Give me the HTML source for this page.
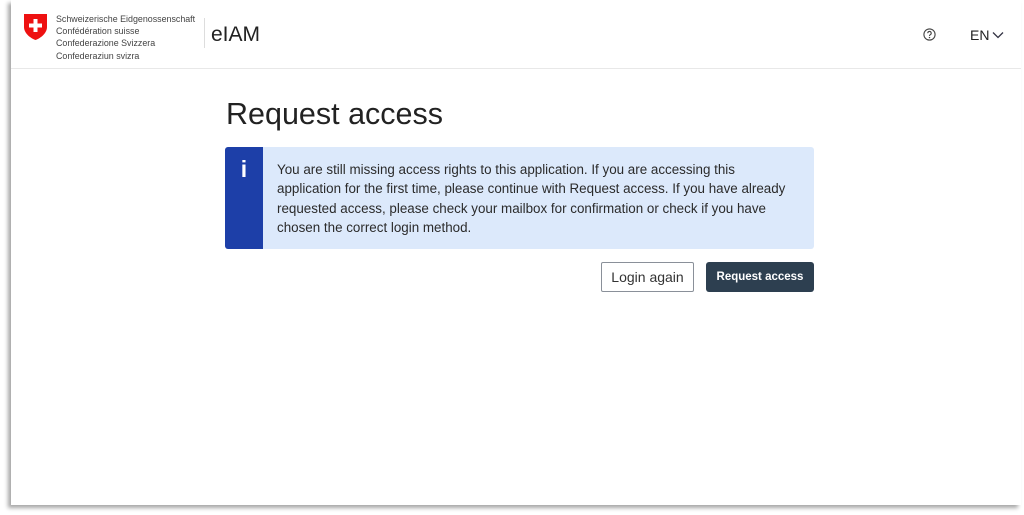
<!DOCTYPE html>
<html><head><meta charset="utf-8"><style>
*{margin:0;padding:0;box-sizing:border-box}
body{width:1024px;height:515px;background:#fff;font-family:"Liberation Sans","DejaVu Sans",sans-serif;position:relative;overflow:hidden}
.page{position:absolute;left:11px;top:0;width:1010px;height:505px;background:#fff;box-shadow:-3px 3px 4px rgba(0,0,0,.35)}
.hdr{position:absolute;left:0;top:0;width:1010px;height:69px;border-bottom:1px solid #e8e8e8}
.fed{position:absolute;left:45px;top:13px;font-size:8.9px;line-height:12.2px;color:#444}
.sep{position:absolute;left:193px;top:18px;width:1px;height:30px;background:#ddd}
.eiam{position:absolute;left:200px;top:23px;font-size:21px;color:#222}
h1{position:absolute;left:215px;top:97px;font-size:30.5px;font-weight:normal;color:#222}
.box{position:absolute;left:214px;top:147px;width:589px;height:102px;background:#dce9fb;border-radius:3px;overflow:hidden}
.bar{position:absolute;left:0;top:0;width:38px;height:102px;background:#1d3fa8;color:#fff;font-size:23px;font-weight:bold;text-align:center;padding-top:9px}
.txt{position:absolute;left:52px;top:13px;font-size:13.4px;line-height:19.3px;color:#2b2b2b;white-space:nowrap}
.b1{position:absolute;left:590px;top:262px;width:93px;height:30px;border:1px solid #8a9099;border-radius:2px;font-size:14px;color:#333;text-align:center;line-height:28px}
.b2{position:absolute;left:695px;top:262px;width:108px;height:30px;background:#2d3f50;border-radius:3px;font-size:11.5px;font-weight:bold;color:#fff;text-align:center;line-height:30px}
</style></head><body>
<div class="page">
<div class="hdr">
<svg style="position:absolute;left:13px;top:14px" width="23" height="26" viewBox="0 0 23 26"><path d="M0 0H23V13C23 19 17 24 11.5 26C6 24 0 19 0 13Z" fill="#e11"/><path d="M9.5 5h4v4.5h4.5v4h-4.5v4.5h-4v-4.5h-4.5v-4h4.5z" fill="#fff"/></svg>
<div class="fed">Schweizerische Eidgenossenschaft<br>Confédération suisse<br>Confederazione Svizzera<br>Confederaziun svizra</div>
<div class="sep"></div>
<div class="eiam">eIAM</div>
<svg style="position:absolute;left:912px;top:28px" width="13" height="13" viewBox="0 0 13 13"><circle cx="6.5" cy="6.5" r="5.6" fill="none" stroke="#444" stroke-width="1.1"/><path d="M4.8 5.2a1.7 1.7 0 1 1 2.4 1.5c-.6.3-.7.7-.7 1.3" fill="none" stroke="#444" stroke-width="1.1"/><circle cx="6.5" cy="9.6" r=".7" fill="#444"/></svg>
<div style="position:absolute;left:959px;top:27px;font-size:14px;color:#222">EN</div>
<svg style="position:absolute;left:981px;top:31px" width="12" height="8" viewBox="0 0 12 8"><path d="M1 1.5l5 5 5-5" fill="none" stroke="#334" stroke-width="1.3"/></svg>
</div>
<h1>Request access</h1>
<div class="box"><div class="bar">i</div><div class="txt">You are still missing access rights to this application. If you are accessing this<br>application for the first time, please continue with Request access. If you have already<br>requested access, please check your mailbox for confirmation or check if you have<br>chosen the correct login method.</div></div>
<div class="b1">Login again</div>
<div class="b2">Request access</div>
</div>
</body></html>
